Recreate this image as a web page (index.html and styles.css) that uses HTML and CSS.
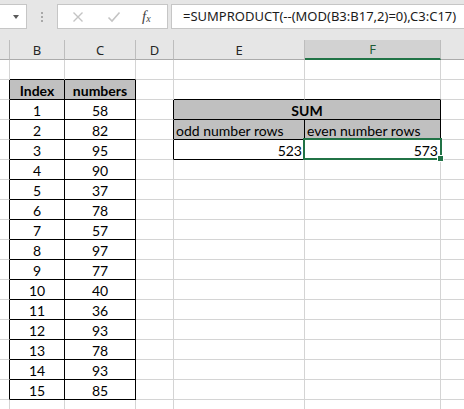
FILE: index.html
```html
<!DOCTYPE html>
<html>
<head>
<meta charset="utf-8">
<link rel="stylesheet" href="styles.css">
</head>
<body>
<div class="app">
  <div class="fbar">
    <div class="namebox"><span class="caret"></span></div>
    <div class="grip"><i></i><i></i><i></i></div>
    <div class="fxbox">
      <svg class="ico" width="12" height="12" viewBox="0 0 12 12"><path d="M1.5 1.5 L10.5 10.5 M10.5 1.5 L1.5 10.5" stroke="#c4c4c4" stroke-width="1.4" fill="none"/></svg>
      <svg class="ico" width="14" height="12" viewBox="0 0 14 12"><path d="M1.5 6.5 L5 10 L12.5 1.5" stroke="#c4c4c4" stroke-width="1.6" fill="none"/></svg>
      <span class="fx">f<sub>x</sub></span>
    </div>
    <div class="formula">=SUMPRODUCT(--(MOD(B3:B17,2)=0),C3:C17)</div>
  </div>
  <table class="sheet">
    <colgroup>
      <col class="w-a"><col class="w-b"><col class="w-c"><col class="w-d"><col class="w-e"><col class="w-f"><col class="w-g">
    </colgroup>
    <tr class="hdr">
      <th></th><th>B</th><th>C</th><th>D</th><th>E</th><th class="sel">F</th><th></th>
    </tr>
    <tr><td></td><td class="bb"></td><td class="bb"></td><td></td><td></td><td></td><td></td></tr>
    <tr><td class="rb"></td><td class="box head ctr">Index</td><td class="box head ctr">numbers</td><td></td><td class="bb"></td><td class="bb"></td><td></td></tr>
    <tr><td class="rb"></td><td class="box ctr">1</td><td class="box ctr">58</td><td class="rb"></td><td class="box head ctr" colspan="2">SUM</td><td></td></tr>
    <tr><td class="rb"></td><td class="box ctr">2</td><td class="box ctr">82</td><td class="rb"></td><td class="box fill">odd number rows</td><td class="box fill">even number rows</td><td></td></tr>
    <tr><td class="rb"></td><td class="box ctr">3</td><td class="box ctr">95</td><td class="rb"></td><td class="box num">523</td><td class="box num active">573<span class="selbox"></span><span class="handle"></span></td><td></td></tr>
    <tr><td class="rb"></td><td class="box ctr">4</td><td class="box ctr">90</td><td></td><td></td><td></td><td></td></tr>
    <tr><td class="rb"></td><td class="box ctr">5</td><td class="box ctr">37</td><td></td><td></td><td></td><td></td></tr>
    <tr><td class="rb"></td><td class="box ctr">6</td><td class="box ctr">78</td><td></td><td></td><td></td><td></td></tr>
    <tr><td class="rb"></td><td class="box ctr">7</td><td class="box ctr">57</td><td></td><td></td><td></td><td></td></tr>
    <tr><td class="rb"></td><td class="box ctr">8</td><td class="box ctr">97</td><td></td><td></td><td></td><td></td></tr>
    <tr><td class="rb"></td><td class="box ctr">9</td><td class="box ctr">77</td><td></td><td></td><td></td><td></td></tr>
    <tr><td class="rb"></td><td class="box ctr">10</td><td class="box ctr">40</td><td></td><td></td><td></td><td></td></tr>
    <tr><td class="rb"></td><td class="box ctr">11</td><td class="box ctr">36</td><td></td><td></td><td></td><td></td></tr>
    <tr><td class="rb"></td><td class="box ctr">12</td><td class="box ctr">93</td><td></td><td></td><td></td><td></td></tr>
    <tr><td class="rb"></td><td class="box ctr">13</td><td class="box ctr">78</td><td></td><td></td><td></td><td></td></tr>
    <tr><td class="rb"></td><td class="box ctr">14</td><td class="box ctr">93</td><td></td><td></td><td></td><td></td></tr>
    <tr><td class="rb"></td><td class="box ctr">15</td><td class="box ctr">85</td><td></td><td></td><td></td><td></td></tr>
    <tr><td></td><td></td><td></td><td></td><td></td><td></td><td></td></tr>
  </table>
</div>
</body>
</html>
```

FILE: styles.css
```css
html, body {
  margin: 0;
  padding: 0;
  background: #ffffff;
}
.app {
  width: 464px;
  height: 409px;
  overflow: hidden;
  background: #ffffff;
}
.fbar {
  height: 40px;
  box-sizing: border-box;
  background: #e6e6e6;
  display: flex;
  align-items: flex-start;
  padding-top: 4px;
}
.namebox {
  width: 27px;
  height: 25px;
  box-sizing: border-box;
  background: #fff;
  border: 1px solid #c6c6c6;
  border-left: none;
  display: flex;
  align-items: center;
  justify-content: flex-end;
  padding-right: 7px;
}
.caret {
  width: 0;
  height: 0;
  border-left: 3.5px solid transparent;
  border-right: 3.5px solid transparent;
  border-top: 4px solid #5a5a5a;
}
.grip {
  width: 30px;
  height: 25px;
  display: flex;
  flex-direction: column;
  align-items: center;
  justify-content: center;
  gap: 2px;
}
.grip i {
  display: block;
  width: 2px;
  height: 2px;
  background: #a8a8a8;
}
.fxbox {
  width: 111px;
  height: 25px;
  box-sizing: border-box;
  background: #fff;
  border: 1px solid #c6c6c6;
  display: flex;
  align-items: center;
  padding-left: 14px;
  gap: 23px;
}
.fx {
  font-family: "Liberation Serif", serif;
  font-style: italic;
  font-size: 15px;
  color: #444;
  margin-left: -2px;
}
.fx sub {
  font-size: 10px;
  vertical-align: baseline;
  position: relative;
  top: 1px;
}
.formula {
  flex: 1;
  margin-left: 3px;
  height: 25px;
  box-sizing: border-box;
  background: #fff;
  border: 1px solid #c6c6c6;
  border-right: none;
  padding-left: 11px;
  font-family: "Noto Sans", sans-serif;
  font-size: 13px;
  line-height: 22px;
  color: #1a1a1a;
  white-space: nowrap;
  overflow: hidden;
}
.sheet {
  table-layout: fixed;
  border-collapse: separate;
  border-spacing: 0;
  width: 524px;
  font-family: Lato, "Liberation Sans", sans-serif;
  font-size: 14px;
  color: #000;
}
.w-a { width: 10px; }
.w-b { width: 55px; }
.w-c { width: 71px; }
.w-d { width: 38px; }
.w-e { width: 131px; }
.w-f { width: 136px; }
.w-g { width: 83px; }
.sheet td, .sheet th {
  box-sizing: border-box;
  height: 20px;
  padding: 0 2px;
  border-right: 1px solid #d4d4d4;
  border-bottom: 1px solid #d4d4d4;
  line-height: 17px;
  vertical-align: bottom;
  white-space: nowrap;
  overflow: visible;
}
.sheet tr.hdr th {
  background: #e6e6e6;
  border-right: 1px solid #bdbdbd;
  border-bottom: 1px solid #ababab;
  font-family: "Noto Sans", sans-serif;
  font-weight: normal;
  font-size: 13px;
  color: #262626;
  line-height: 18px;
  vertical-align: middle;
  text-align: center;
}
.sheet tr.hdr th.sel {
  background: #d2d2d2;
  border-bottom: 2px solid #217346;
  color: #1d5b36;
  line-height: 17px;
}
.sheet td.bb { border-bottom-color: #000; }
.sheet td.rb { border-right-color: #000; }
.sheet td.box {
  border-right-color: #000;
  border-bottom-color: #000;
}
.head {
  background: #c0c0c0;
  font-weight: bold;
}
.fill { background: #c0c0c0; }
.ctr { text-align: center; }
.num { text-align: right; }
.active { position: relative; }
.selbox {
  position: absolute;
  left: -2px;
  top: -2px;
  right: -2px;
  bottom: -1px;
  border: 2px solid #217346;
}
.handle {
  position: absolute;
  right: -4px;
  bottom: -3px;
  width: 5px;
  height: 5px;
  background: #217346;
  border: 1px solid #fff;
}
```
